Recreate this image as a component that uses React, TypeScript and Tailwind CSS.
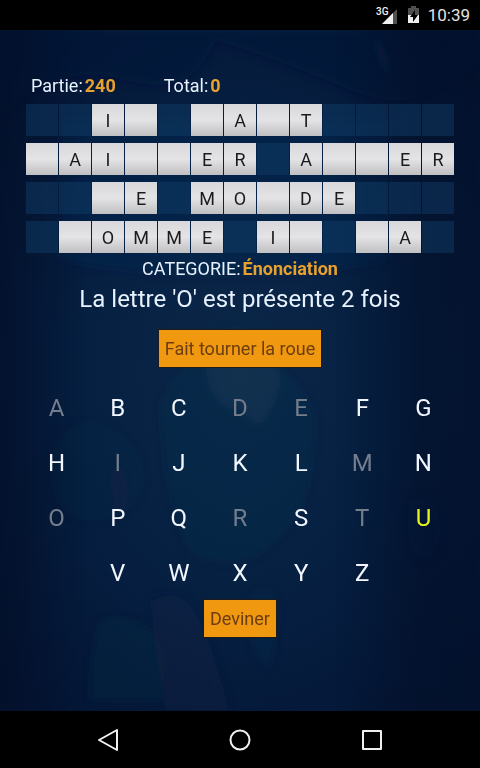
import type { ReactNode } from 'react';

// '.' = case inactive, '_' = lettre cachée
const BOARD = ['..I_._A_T....', '_AI__ER.A__ER', '.._E.MO_DE...', '._OMME.I_._A.'];

const KEY_ROWS = ['ABCDEFG', 'HIJKLMN', 'OPQRSTU', 'VWXYZ'];
const USED = 'ADEIMORT';
const SELECTED = 'U';

function StatusBar() {
  return (
    <header className="flex h-[30px] items-center justify-end gap-2 bg-black pr-[10px] text-[#e4e4e4]">
      <svg width="24" height="20" viewBox="0 0 24 20" aria-hidden="true">
        <path d="M22 4v15H7z" fill="#505050" />
        <path d="M18 8v11H7z" fill="#f0f0f0" />
        <text x="1" y="10" fill="#f0f0f0" className="font-[Roboto,sans-serif] text-[10px] font-medium">
          3G
        </text>
      </svg>
      <svg width="13" height="20" viewBox="0 0 13 20" aria-hidden="true">
        <path d="M4 1h5v2h3v7H1V3h3z" fill="#505050" />
        <path d="M1 10h11v8H1z" fill="#f0f0f0" />
        <path d="M8 5l-5 7h3v5l5-7H8z" fill="#000" />
      </svg>
      <span className="text-[17px] leading-5">10:39</span>
    </header>
  );
}

function Backdrop() {
  return (
    <svg
      className="absolute inset-0 -z-10 h-full w-full"
      viewBox="0 0 480 680"
      preserveAspectRatio="none"
      aria-hidden="true"
    >
      <defs>
        <radialGradient id="glow" cx="0.5" cy="0.5" r="0.65">
          <stop offset="0" stopColor="#0b2748" />
          <stop offset="0.5" stopColor="#062042" />
          <stop offset="1" stopColor="#041535" />
        </radialGradient>
        <linearGradient id="sides">
          <stop offset="0" stopColor="#030e26" stopOpacity="0.6" />
          <stop offset="0.18" stopColor="#030e26" stopOpacity="0" />
          <stop offset="0.7" stopColor="#030e26" stopOpacity="0" />
          <stop offset="0.88" stopColor="#030e26" stopOpacity="0.55" />
          <stop offset="1" stopColor="#030e26" stopOpacity="0.5" />
        </linearGradient>
        <filter id="soft">
          <feGaussianBlur stdDeviation="4" />
        </filter>
      </defs>
      <rect width="480" height="680" fill="url(#glow)" />
      <g filter="url(#soft)">
        <path d="M0 0h480v30q-60 60-130 30T215 10q-20 60-90 40T0 90z" fill="#07143a" opacity="0.5" />
        <path d="M60 90h330v140q-160 30-330 0z" fill="#06284e" opacity="0.4" />
        <path d="M160 375q20-60 80-50t75 60q0 80-25 110t-45 35-52-5q-30-50-33-150z" fill="#16344e" opacity="0.2" />
        <path d="M52 420q20-40 55-25t38 55q-10 40-55 40t-38-70z" fill="#133c50" opacity="0.1" />
        <path d="M205 315q30-30 60 0t2 70q-10 20-24-5-40 0-38-65z" fill="#1b4a68" opacity="0.2" />
        <path d="M112 435q14 0 16 20t-8 30q-12-10-8-50z" fill="#301c48" opacity="0.15" />
        <path d="M150 570q30-15 45 10t35 100h-65q-10-60-15-110z" fill="#2b1f4c" opacity="0.15" />
        <path d="M250 565q20-12 26 5t-6 65q-24-4-20-70z" fill="#143b58" opacity="0.2" />
        <path d="M100 590q25-10 50 10t10 70H90q0-50 10-80z" fill="#0a3246" opacity="0.2" />
        <path d="M410 470q25-10 30 20t-20 40q-18-20-10-60z" fill="#13184a" opacity="0.25" />
        <path d="M375 5q10 10 15 40-12-5-15-40z" fill="#1b3558" opacity="0.3" />
      </g>
      <rect width="480" height="680" fill="url(#sides)" />
    </svg>
  );
}

function Tile({ value }: { value: string }) {
  if (value === '.') {
    return <div className="h-8 flex-1 bg-[#12406a]/45" />;
  }
  return (
    <div className="flex h-8 flex-1 items-center justify-center bg-linear-to-b from-[#d8d8dc] via-[#e4e4e6] to-[#c0c0c3] pt-0.5 text-[18px] leading-6 text-[#1b1b1b]">
      {value === '_' ? '' : value}
    </div>
  );
}

function keyColor(letter: string) {
  if (letter === SELECTED) return 'text-[#e6f51e]';
  if (USED.includes(letter)) return 'text-[#737d8b]';
  return 'text-[#f2f7ff]';
}

function Field({ label, value }: { label: string; value: string }) {
  return (
    <p className="flex gap-[2px] text-[18px] leading-6">
      <span>{label}</span>
      <strong className="text-[#e8a02e]">{value}</strong>
    </p>
  );
}

function ActionButton({ children }: { children: ReactNode }) {
  return (
    <button
      type="button"
      className="h-[37px] bg-[#f0980f] px-[6px] text-[18px] leading-6 text-[#6b3d10] outline-1 outline-[#1d1a1c]"
    >
      {children}
    </button>
  );
}

function NavBar() {
  return (
    <nav className="flex h-[57px] items-center justify-center gap-[108px] bg-black">
      <button type="button" aria-label="Retour">
        <svg width="24" height="24" viewBox="0 0 24 24" fill="none" stroke="#f0f0f0" strokeWidth="2" strokeLinejoin="round">
          <path d="M21 2v20L3 12z" />
        </svg>
      </button>
      <button type="button" aria-label="Accueil">
        <svg width="24" height="24" viewBox="0 0 24 24" fill="none" stroke="#f0f0f0" strokeWidth="2">
          <circle cx="12" cy="12" r="9.5" />
        </svg>
      </button>
      <button type="button" aria-label="Applications récentes">
        <svg width="24" height="24" viewBox="0 0 24 24" fill="none" stroke="#f0f0f0" strokeWidth="2" strokeLinejoin="round">
          <path d="M3 3h18v18H3z" />
        </svg>
      </button>
    </nav>
  );
}

export default function App() {
  return (
    <div className="flex min-h-screen flex-col bg-black font-[Roboto,sans-serif]">
      <StatusBar />
      <main className="relative isolate flex flex-1 flex-col items-center px-[26px] pt-11 text-[#e8f2ff]">
        <Backdrop />

        <div className="flex w-full gap-12 px-[5px]">
          <Field label="Partie:" value="240" />
          <Field label="Total:" value="0" />
        </div>

        <div className="mt-[6px] mb-1 flex w-full flex-col gap-[7px]">
          {BOARD.map((row) => (
            <div key={row} className="flex gap-px">
              {row.split('').map((value, i) => (
                <Tile key={i} value={value} />
              ))}
            </div>
          ))}
        </div>

        <Field label="CATEGORIE:" value="Énonciation" />
        <p className="mt-0.5 mb-[15px] text-2xl">La lettre 'O' est présente 2 fois</p>

        <ActionButton>Fait tourner la roue</ActionButton>

        <div className="mt-[13px] flex w-full flex-col">
          {KEY_ROWS.map((row) => (
            <div key={row} className="flex justify-center">
              {row.split('').map((letter) => (
                <button
                  key={letter}
                  type="button"
                  disabled={USED.includes(letter)}
                  className={`h-[55px] w-1/7 text-2xl ${keyColor(letter)}`}
                >
                  {letter}
                </button>
              ))}
            </div>
          ))}
        </div>

        <ActionButton>Deviner</ActionButton>
      </main>
      <NavBar />
    </div>
  );
}
